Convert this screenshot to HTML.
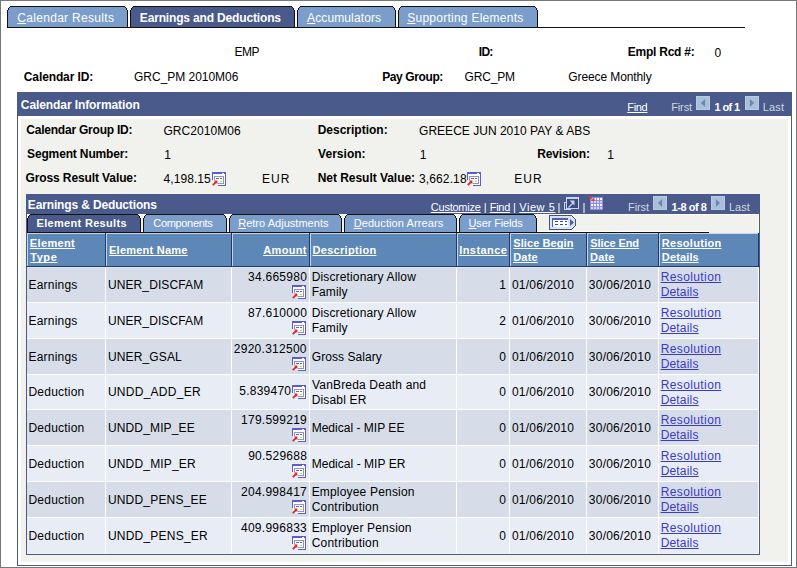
<!DOCTYPE html>
<html><head><meta charset="utf-8"><style>
html,body{margin:0;padding:0;}
body{width:797px;height:568px;position:relative;overflow:hidden;background:#fff;font-family:"Liberation Sans",sans-serif;}
.a{position:absolute;}
.t{position:absolute;white-space:nowrap;line-height:14px;text-decoration-skip-ink:none;}
u{text-decoration-skip-ink:none;}
svg{display:block;}
</style></head><body>
<div class="a" style="left:0px;top:0px;width:797px;height:1px;background:#777;"></div>
<div class="a" style="left:0px;top:567px;width:797px;height:1px;background:#777;"></div>
<div class="a" style="left:0px;top:0px;width:1px;height:568px;background:#777;"></div>
<div class="a" style="left:796px;top:0px;width:1px;height:568px;background:#777;"></div>
<svg class="a" style="left:7px;top:6px" width="121" height="21" shape-rendering="crispEdges"><rect x="3" y="1" width="115" height="1" fill="#7b9dcc"/><rect x="2" y="2" width="117" height="2" fill="#7b9dcc"/><rect x="1" y="4" width="119" height="17" fill="#7b9dcc"/><rect x="3" y="0" width="115" height="1" fill="#111"/><rect x="2" y="1" width="1" height="1" fill="#111"/><rect x="118" y="1" width="1" height="1" fill="#111"/><rect x="1" y="2" width="1" height="2" fill="#111"/><rect x="119" y="2" width="1" height="2" fill="#111"/><rect x="0" y="4" width="1" height="17" fill="#111"/><rect x="120" y="4" width="1" height="17" fill="#111"/></svg>
<svg class="a" style="left:130px;top:6px" width="165" height="21" shape-rendering="crispEdges"><rect x="3" y="1" width="159" height="1" fill="#4a5a8a"/><rect x="2" y="2" width="161" height="2" fill="#4a5a8a"/><rect x="1" y="4" width="163" height="17" fill="#4a5a8a"/><rect x="3" y="0" width="159" height="1" fill="#111"/><rect x="2" y="1" width="1" height="1" fill="#111"/><rect x="162" y="1" width="1" height="1" fill="#111"/><rect x="1" y="2" width="1" height="2" fill="#111"/><rect x="163" y="2" width="1" height="2" fill="#111"/><rect x="0" y="4" width="1" height="17" fill="#111"/><rect x="164" y="4" width="1" height="17" fill="#111"/></svg>
<svg class="a" style="left:297px;top:6px" width="99" height="21" shape-rendering="crispEdges"><rect x="3" y="1" width="93" height="1" fill="#7b9dcc"/><rect x="2" y="2" width="95" height="2" fill="#7b9dcc"/><rect x="1" y="4" width="97" height="17" fill="#7b9dcc"/><rect x="3" y="0" width="93" height="1" fill="#111"/><rect x="2" y="1" width="1" height="1" fill="#111"/><rect x="96" y="1" width="1" height="1" fill="#111"/><rect x="1" y="2" width="1" height="2" fill="#111"/><rect x="97" y="2" width="1" height="2" fill="#111"/><rect x="0" y="4" width="1" height="17" fill="#111"/><rect x="98" y="4" width="1" height="17" fill="#111"/></svg>
<svg class="a" style="left:398px;top:6px" width="140" height="21" shape-rendering="crispEdges"><rect x="3" y="1" width="134" height="1" fill="#7b9dcc"/><rect x="2" y="2" width="136" height="2" fill="#7b9dcc"/><rect x="1" y="4" width="138" height="17" fill="#7b9dcc"/><rect x="3" y="0" width="134" height="1" fill="#111"/><rect x="2" y="1" width="1" height="1" fill="#111"/><rect x="137" y="1" width="1" height="1" fill="#111"/><rect x="1" y="2" width="1" height="2" fill="#111"/><rect x="138" y="2" width="1" height="2" fill="#111"/><rect x="0" y="4" width="1" height="17" fill="#111"/><rect x="139" y="4" width="1" height="17" fill="#111"/></svg>
<div class="a" style="left:7px;top:27px;width:738px;height:1px;background:#111;"></div>
<div class="t" id="t0" style="left:17.27px;top:11.0px;font-size:12px;color:#fff;letter-spacing:0.305px;"><u>C</u>alendar Results</div>
<div class="t" id="t1" style="left:139.82px;top:11.0px;font-size:12px;font-weight:bold;color:#fff;letter-spacing:-0.160px;">Earnings and Deductions</div>
<div class="t" id="t2" style="left:307.04px;top:11.0px;font-size:12px;color:#fff;letter-spacing:0.119px;"><u>A</u>ccumulators</div>
<div class="t" id="t3" style="left:407.20px;top:11.0px;font-size:12px;color:#fff;letter-spacing:0.257px;"><u>S</u>upporting Elements</div>
<div class="t" id="t4" style="left:234.49px;top:45.0px;font-size:12px;letter-spacing:-0.534px;">EMP</div>
<div class="t" id="t5" style="left:478.83px;top:45.0px;font-size:12px;font-weight:bold;letter-spacing:-0.737px;">ID:</div>
<div class="t" id="t6" style="left:627.82px;top:45.0px;font-size:12px;font-weight:bold;letter-spacing:-0.253px;">Empl Rcd #:</div>
<div class="t" id="t7" style="left:714.44px;top:46.0px;font-size:12px;">0</div>
<div class="t" id="t8" style="left:23.84px;top:70.0px;font-size:12px;font-weight:bold;letter-spacing:-0.122px;">Calendar ID:</div>
<div class="t" id="t9" style="left:134.07px;top:70.0px;font-size:12px;letter-spacing:-0.030px;">GRC_PM 2010M06</div>
<div class="t" id="t10" style="left:382.23px;top:70.0px;font-size:12px;font-weight:bold;letter-spacing:-0.395px;">Pay Group:</div>
<div class="t" id="t11" style="left:464.61px;top:70.0px;font-size:12px;letter-spacing:-0.195px;">GRC_PM</div>
<div class="t" id="t12" style="left:568.27px;top:70.0px;font-size:12px;letter-spacing:-0.099px;">Greece Monthly</div>
<div class="a" style="left:17px;top:92px;width:775px;height:474px;background:#4a5a8a;"></div>
<div class="a" style="left:18px;top:116px;width:773px;height:449px;background:#fff;"></div>
<div class="a" style="left:21px;top:119px;width:767px;height:443px;background:#f1f2ed;"></div>
<div class="t" id="t13" style="left:20.84px;top:98.0px;font-size:12px;font-weight:bold;color:#fff;letter-spacing:-0.088px;">Calendar Information</div>
<div class="t" id="t14" style="left:627.21px;top:100.0px;font-size:11px;color:#fff;letter-spacing:-0.289px;text-decoration:underline;">Find</div>
<div class="t" id="t15" style="left:671.21px;top:100.0px;font-size:11px;color:#d0d6e2;letter-spacing:-0.131px;">First</div>
<div class="t" id="t16" style="left:714.61px;top:100.0px;font-size:11px;font-weight:bold;color:#fff;letter-spacing:-0.644px;">1 of 1</div>
<div class="t" id="t17" style="left:762.81px;top:100.0px;font-size:11px;color:#d0d6e2;letter-spacing:0.118px;">Last</div>
<div class="a" style="left:696px;top:96px;width:14px;height:14px"><svg width="14" height="14" shape-rendering="crispEdges"><rect width="14" height="14" fill="#b6cae2"/><rect x="1" y="1" width="12" height="12" fill="#aac0da"/><path d="M9.1 3 L9.1 11 L4.9 7 Z" fill="#6a88b2" shape-rendering="auto"/></svg></div>
<div class="a" style="left:745px;top:96px;width:14px;height:14px"><svg width="14" height="14" shape-rendering="crispEdges"><rect width="14" height="14" fill="#b6cae2"/><rect x="1" y="1" width="12" height="12" fill="#aac0da"/><path d="M4.9 3 L4.9 11 L9.1 7 Z" fill="#6a88b2" shape-rendering="auto"/></svg></div>
<div class="t" id="t18" style="left:26.29px;top:123.0px;font-size:12px;font-weight:bold;letter-spacing:-0.220px;">Calendar Group ID:</div>
<div class="t" id="t19" style="left:163.41px;top:124.0px;font-size:12px;letter-spacing:0.076px;">GRC2010M06</div>
<div class="t" id="t20" style="left:317.69px;top:123.0px;font-size:12px;font-weight:bold;letter-spacing:-0.003px;">Description:</div>
<div class="t" id="t21" style="left:419.07px;top:124.0px;font-size:12px;letter-spacing:0.016px;">GREECE JUN 2010 PAY &amp; ABS</div>
<div class="t" id="t22" style="left:27.06px;top:147.0px;font-size:12px;font-weight:bold;letter-spacing:-0.149px;">Segment Number:</div>
<div class="t" id="t23" style="left:164.21px;top:148.0px;font-size:12px;">1</div>
<div class="t" id="t24" style="left:318.07px;top:147.0px;font-size:12px;font-weight:bold;letter-spacing:0.029px;">Version:</div>
<div class="t" id="t25" style="left:419.72px;top:148.0px;font-size:12px;">1</div>
<div class="t" id="t26" style="left:537.23px;top:147.0px;font-size:12px;font-weight:bold;letter-spacing:-0.167px;">Revision:</div>
<div class="t" id="t27" style="left:607.15px;top:148.0px;font-size:12px;">1</div>
<div class="t" id="t28" style="left:25.46px;top:171.0px;font-size:12px;font-weight:bold;letter-spacing:-0.106px;">Gross Result Value:</div>
<div class="t" id="t29" style="left:163.49px;top:172.0px;font-size:12px;letter-spacing:0.073px;">4,198.15</div>
<div class="a" style="left:212px;top:172px;width:14px;height:14px"><svg width="14" height="14" viewBox="0 0 14 14" shape-rendering="crispEdges"><rect x="1" y="2" width="12" height="11" fill="#fff"/><rect x="0" y="0" width="14" height="2" fill="#5a5ccf"/><rect x="10" y="1" width="2" height="1" fill="#fff"/><rect x="0" y="0" width="1" height="8" fill="#5a5ccf"/><rect x="13" y="0" width="1" height="14" fill="#5a5ccf"/><rect x="6" y="13" width="8" height="1" fill="#5a5ccf"/><rect x="2" y="4" width="10" height="1" fill="#8a90e0"/><rect x="2" y="4" width="1" height="4" fill="#8a90e0"/><rect x="11" y="4" width="1" height="8" fill="#8a90e0"/><rect x="6" y="11" width="6" height="1" fill="#8a90e0"/><rect x="4" y="6" width="3" height="1" fill="#6a6a6a"/><rect x="8" y="6" width="2" height="1" fill="#6a6a6a"/><rect x="8" y="9" width="2" height="1" fill="#d4d400"/><path d="M0.8 13.2 L4 10" stroke="#d82828" stroke-width="1.8" fill="none" shape-rendering="auto"/><path d="M1.8 8.6 H5.4 V12.2 Z" fill="#d82828" shape-rendering="auto"/></svg></div>
<div class="t" id="t30" style="left:262.11px;top:172.0px;font-size:12px;letter-spacing:0.929px;">EUR</div>
<div class="t" id="t31" style="left:317.69px;top:171.0px;font-size:12px;font-weight:bold;letter-spacing:-0.040px;">Net Result Value:</div>
<div class="t" id="t32" style="left:419.06px;top:172.0px;font-size:12px;letter-spacing:0.116px;">3,662.18</div>
<div class="a" style="left:467px;top:172px;width:14px;height:14px"><svg width="14" height="14" viewBox="0 0 14 14" shape-rendering="crispEdges"><rect x="1" y="2" width="12" height="11" fill="#fff"/><rect x="0" y="0" width="14" height="2" fill="#5a5ccf"/><rect x="10" y="1" width="2" height="1" fill="#fff"/><rect x="0" y="0" width="1" height="8" fill="#5a5ccf"/><rect x="13" y="0" width="1" height="14" fill="#5a5ccf"/><rect x="6" y="13" width="8" height="1" fill="#5a5ccf"/><rect x="2" y="4" width="10" height="1" fill="#8a90e0"/><rect x="2" y="4" width="1" height="4" fill="#8a90e0"/><rect x="11" y="4" width="1" height="8" fill="#8a90e0"/><rect x="6" y="11" width="6" height="1" fill="#8a90e0"/><rect x="4" y="6" width="3" height="1" fill="#6a6a6a"/><rect x="8" y="6" width="2" height="1" fill="#6a6a6a"/><rect x="8" y="9" width="2" height="1" fill="#d4d400"/><path d="M0.8 13.2 L4 10" stroke="#d82828" stroke-width="1.8" fill="none" shape-rendering="auto"/><path d="M1.8 8.6 H5.4 V12.2 Z" fill="#d82828" shape-rendering="auto"/></svg></div>
<div class="t" id="t33" style="left:514.29px;top:172.0px;font-size:12px;letter-spacing:1.002px;">EUR</div>
<div class="a" style="left:26px;top:194px;width:734px;height:20px;background:#4a5a8a;"></div>
<div class="t" id="t34" style="left:27.82px;top:198.0px;font-size:12px;font-weight:bold;color:#fff;letter-spacing:-0.144px;">Earnings &amp; Deductions</div>
<div class="t" id="t35" style="left:430.81px;top:200.0px;font-size:11px;color:#fff;letter-spacing:-0.239px;text-decoration:underline;">Customize</div>
<div class="t" id="t36" style="left:483.66px;top:200.0px;font-size:11px;color:#fff;">|</div>
<div class="t" id="t37" style="left:489.66px;top:200.0px;font-size:11px;color:#fff;letter-spacing:-0.225px;text-decoration:underline;">Find</div>
<div class="t" id="t38" style="left:512.91px;top:200.0px;font-size:11px;color:#fff;">|</div>
<div class="t" id="t39" style="left:519.24px;top:200.0px;font-size:11px;color:#fff;letter-spacing:0.544px;text-decoration:underline;">View 5</div>
<div class="t" id="t40" style="left:557.50px;top:200px;font-size:11px;color:#fff;">|</div>
<div class="t" id="t41" style="left:582.60px;top:200px;font-size:11px;color:#fff;">|</div>
<div class="t" id="t42" style="left:628.01px;top:200.0px;font-size:11px;color:#d0d6e2;letter-spacing:-0.078px;">First</div>
<div class="t" id="t43" style="left:671.61px;top:200.0px;font-size:11px;font-weight:bold;color:#fff;letter-spacing:-0.452px;">1-8 of 8</div>
<div class="t" id="t44" style="left:728.97px;top:200.0px;font-size:11px;color:#d0d6e2;letter-spacing:-0.023px;">Last</div>
<div class="a" style="left:653px;top:196px;width:14px;height:14px"><svg width="14" height="14" shape-rendering="crispEdges"><rect width="14" height="14" fill="#b6cae2"/><rect x="1" y="1" width="12" height="12" fill="#aac0da"/><path d="M9.1 3 L9.1 11 L4.9 7 Z" fill="#6a88b2" shape-rendering="auto"/></svg></div>
<div class="a" style="left:711px;top:196px;width:14px;height:14px"><svg width="14" height="14" shape-rendering="crispEdges"><rect width="14" height="14" fill="#b6cae2"/><rect x="1" y="1" width="12" height="12" fill="#aac0da"/><path d="M4.9 3 L4.9 11 L9.1 7 Z" fill="#6a88b2" shape-rendering="auto"/></svg></div>
<svg class="a" style="left:563px;top:196px" width="18" height="15" shape-rendering="crispEdges"><rect x="1" y="6" width="7" height="8" fill="#c8d2f2"/><rect x="2" y="7" width="5" height="6" fill="#4a5a8a"/><rect x="3" y="1" width="13" height="12" fill="#c8d2f2"/><rect x="4" y="3" width="11" height="9" fill="#3c4c82"/><path d="M5.5 11.5 L10 7" stroke="#c8d2f2" stroke-width="1.3" fill="none" shape-rendering="auto"/><path d="M6.5 4.5 H11.5 V9.5 Z" fill="#c8d2f2" shape-rendering="auto"/></svg>
<svg class="a" style="left:588px;top:195px" width="16" height="16" shape-rendering="crispEdges"><rect x="2" y="2" width="13" height="13" fill="#8a8ee8"/><rect x="3" y="3" width="2" height="2" fill="#ffffff"/><rect x="3" y="6" width="2" height="2" fill="#d6d2fa"/><rect x="3" y="9" width="2" height="2" fill="#ffffff"/><rect x="3" y="12" width="2" height="2" fill="#d6d2fa"/><rect x="6" y="3" width="2" height="2" fill="#ffffff"/><rect x="6" y="6" width="2" height="2" fill="#d6d2fa"/><rect x="6" y="9" width="2" height="2" fill="#ffffff"/><rect x="6" y="12" width="2" height="2" fill="#d6d2fa"/><rect x="9" y="3" width="2" height="2" fill="#ffffff"/><rect x="9" y="6" width="2" height="2" fill="#d6d2fa"/><rect x="9" y="9" width="2" height="2" fill="#ffffff"/><rect x="9" y="12" width="2" height="2" fill="#d6d2fa"/><rect x="12" y="3" width="2" height="2" fill="#ffffff"/><rect x="12" y="6" width="2" height="2" fill="#d6d2fa"/><rect x="12" y="9" width="2" height="2" fill="#ffffff"/><rect x="12" y="12" width="2" height="2" fill="#d6d2fa"/><path d="M1 1 L4.5 4.5" stroke="#e03838" stroke-width="1.6" fill="none" shape-rendering="auto"/><path d="M6.5 2.5 L6.5 6 L3 6 Z" fill="#e03838" shape-rendering="auto"/></svg>
<div class="a" style="left:27px;top:214px;width:732px;height:19px;background:#f1f2ed;"></div>
<div class="a" style="left:27px;top:214px;width:732px;height:1px;background:#fff;"></div>
<div class="a" style="left:758px;top:214px;width:1px;height:19px;background:#fff;"></div>
<div class="a" style="left:27px;top:231px;width:682px;height:1px;background:#fff;"></div>
<div class="a" style="left:26px;top:214px;width:1px;height:20px;background:#4a5a8a;"></div>
<div class="a" style="left:759px;top:214px;width:1px;height:20px;background:#4a5a8a;"></div>
<svg class="a" style="left:27px;top:214px" width="114" height="18" shape-rendering="crispEdges"><rect x="0" y="0" width="114" height="18" fill="#fff"/><rect x="3" y="1" width="108" height="1" fill="#4a5a8a"/><rect x="2" y="2" width="110" height="2" fill="#4a5a8a"/><rect x="1" y="4" width="112" height="14" fill="#4a5a8a"/><rect x="3" y="0" width="108" height="1" fill="#111"/><rect x="2" y="1" width="1" height="1" fill="#111"/><rect x="111" y="1" width="1" height="1" fill="#111"/><rect x="1" y="2" width="1" height="2" fill="#111"/><rect x="112" y="2" width="1" height="2" fill="#111"/><rect x="0" y="4" width="1" height="14" fill="#111"/><rect x="113" y="4" width="1" height="14" fill="#111"/></svg>
<svg class="a" style="left:143px;top:214px" width="84" height="18" shape-rendering="crispEdges"><rect x="0" y="0" width="84" height="18" fill="#fff"/><rect x="3" y="1" width="78" height="1" fill="#7b9dcc"/><rect x="2" y="2" width="80" height="2" fill="#7b9dcc"/><rect x="1" y="4" width="82" height="14" fill="#7b9dcc"/><rect x="3" y="0" width="78" height="1" fill="#111"/><rect x="2" y="1" width="1" height="1" fill="#111"/><rect x="81" y="1" width="1" height="1" fill="#111"/><rect x="1" y="2" width="1" height="2" fill="#111"/><rect x="82" y="2" width="1" height="2" fill="#111"/><rect x="0" y="4" width="1" height="14" fill="#111"/><rect x="83" y="4" width="1" height="14" fill="#111"/></svg>
<svg class="a" style="left:229px;top:214px" width="113" height="18" shape-rendering="crispEdges"><rect x="0" y="0" width="113" height="18" fill="#fff"/><rect x="3" y="1" width="107" height="1" fill="#7b9dcc"/><rect x="2" y="2" width="109" height="2" fill="#7b9dcc"/><rect x="1" y="4" width="111" height="14" fill="#7b9dcc"/><rect x="3" y="0" width="107" height="1" fill="#111"/><rect x="2" y="1" width="1" height="1" fill="#111"/><rect x="110" y="1" width="1" height="1" fill="#111"/><rect x="1" y="2" width="1" height="2" fill="#111"/><rect x="111" y="2" width="1" height="2" fill="#111"/><rect x="0" y="4" width="1" height="14" fill="#111"/><rect x="112" y="4" width="1" height="14" fill="#111"/></svg>
<svg class="a" style="left:344px;top:214px" width="113" height="18" shape-rendering="crispEdges"><rect x="0" y="0" width="113" height="18" fill="#fff"/><rect x="3" y="1" width="107" height="1" fill="#7b9dcc"/><rect x="2" y="2" width="109" height="2" fill="#7b9dcc"/><rect x="1" y="4" width="111" height="14" fill="#7b9dcc"/><rect x="3" y="0" width="107" height="1" fill="#111"/><rect x="2" y="1" width="1" height="1" fill="#111"/><rect x="110" y="1" width="1" height="1" fill="#111"/><rect x="1" y="2" width="1" height="2" fill="#111"/><rect x="111" y="2" width="1" height="2" fill="#111"/><rect x="0" y="4" width="1" height="14" fill="#111"/><rect x="112" y="4" width="1" height="14" fill="#111"/></svg>
<svg class="a" style="left:459px;top:214px" width="78" height="18" shape-rendering="crispEdges"><rect x="0" y="0" width="78" height="18" fill="#fff"/><rect x="3" y="1" width="72" height="1" fill="#7b9dcc"/><rect x="2" y="2" width="74" height="2" fill="#7b9dcc"/><rect x="1" y="4" width="76" height="14" fill="#7b9dcc"/><rect x="3" y="0" width="72" height="1" fill="#111"/><rect x="2" y="1" width="1" height="1" fill="#111"/><rect x="75" y="1" width="1" height="1" fill="#111"/><rect x="1" y="2" width="1" height="2" fill="#111"/><rect x="76" y="2" width="1" height="2" fill="#111"/><rect x="0" y="4" width="1" height="14" fill="#111"/><rect x="77" y="4" width="1" height="14" fill="#111"/></svg>
<div class="a" style="left:27px;top:232px;width:682px;height:1px;background:#111;"></div>
<div class="t" id="t45" style="left:36.51px;top:216.0px;font-size:11px;font-weight:bold;color:#fff;letter-spacing:0.317px;">Element Results</div>
<div class="t" id="t46" style="left:153.27px;top:216.0px;font-size:11px;color:#fff;letter-spacing:-0.321px;">Components</div>
<div class="t" id="t47" style="left:238.17px;top:216.0px;font-size:11px;color:#fff;letter-spacing:0.028px;"><u>R</u>etro Adjustments</div>
<div class="t" id="t48" style="left:353.66px;top:216.0px;font-size:11px;color:#fff;letter-spacing:0.091px;"><u>D</u>eduction Arrears</div>
<div class="t" id="t49" style="left:468.47px;top:216.0px;font-size:11px;color:#fff;letter-spacing:-0.125px;"><u>U</u>ser Fields</div>
<svg class="a" style="left:549px;top:215px" width="27" height="15" shape-rendering="crispEdges"><rect x="1" y="1" width="22" height="13" fill="#d8e4fa"/><rect x="23" y="2" width="1" height="11" fill="#d8e4fa"/><rect x="24" y="3" width="1" height="9" fill="#d8e4fa"/><rect x="25" y="4" width="1" height="7" fill="#d8e4fa"/><rect x="0" y="0" width="23" height="1" fill="#4c5266"/><rect x="0" y="14" width="23" height="1" fill="#4c5266"/><rect x="0" y="0" width="1" height="15" fill="#4c5266"/><rect x="23" y="1" width="1" height="1" fill="#4c5266"/><rect x="24" y="2" width="1" height="1" fill="#4c5266"/><rect x="25" y="3" width="1" height="1" fill="#4c5266"/><rect x="26" y="4" width="1" height="7" fill="#4c5266"/><rect x="25" y="11" width="1" height="1" fill="#4c5266"/><rect x="24" y="12" width="1" height="1" fill="#4c5266"/><rect x="23" y="13" width="1" height="1" fill="#4c5266"/><rect x="3" y="3" width="16" height="2" fill="#5060b0"/><rect x="3" y="3" width="1" height="9" fill="#5060b0"/><rect x="4" y="5" width="15" height="7" fill="#fff"/><rect x="6" y="6" width="3" height="1" fill="#3a4a8a"/><rect x="11" y="6" width="3" height="1" fill="#3a4a8a"/><rect x="16" y="6" width="2" height="1" fill="#3a4a8a"/><rect x="6" y="9" width="3" height="1" fill="#3a4a8a"/><rect x="11" y="9" width="3" height="1" fill="#3a4a8a"/><rect x="16" y="9" width="2" height="1" fill="#3a4a8a"/><path d="M21 4 L25 7.5 L21 11 Z" fill="#4a5a9a" shape-rendering="auto"/></svg>
<div class="a" style="left:26px;top:233px;width:734px;height:34px;background:#5c87b6;"></div>
<div class="a" style="left:26px;top:233px;width:1px;height:322px;background:#4a5a8a;"></div>
<div class="a" style="left:759px;top:233px;width:1px;height:322px;background:#4a5a8a;"></div>
<div class="a" style="left:27px;top:233px;width:732px;height:1px;background:#c8d4e6;"></div>
<div class="a" style="left:26px;top:266px;width:734px;height:1px;background:#1f3a70;"></div>
<div class="a" style="left:27px;top:233px;width:1px;height:33px;background:#c8d4e6;"></div>
<div class="a" style="left:105px;top:233px;width:1px;height:34px;background:#1f3a70;"></div>
<div class="a" style="left:106px;top:233px;width:1px;height:33px;background:#c8d4e6;"></div>
<div class="a" style="left:231px;top:233px;width:1px;height:34px;background:#1f3a70;"></div>
<div class="a" style="left:232px;top:233px;width:1px;height:33px;background:#c8d4e6;"></div>
<div class="a" style="left:309px;top:233px;width:1px;height:34px;background:#1f3a70;"></div>
<div class="a" style="left:310px;top:233px;width:1px;height:33px;background:#c8d4e6;"></div>
<div class="a" style="left:456px;top:233px;width:1px;height:34px;background:#1f3a70;"></div>
<div class="a" style="left:457px;top:233px;width:1px;height:33px;background:#c8d4e6;"></div>
<div class="a" style="left:509px;top:233px;width:1px;height:34px;background:#1f3a70;"></div>
<div class="a" style="left:510px;top:233px;width:1px;height:33px;background:#c8d4e6;"></div>
<div class="a" style="left:586px;top:233px;width:1px;height:34px;background:#1f3a70;"></div>
<div class="a" style="left:587px;top:233px;width:1px;height:33px;background:#c8d4e6;"></div>
<div class="a" style="left:658px;top:233px;width:1px;height:34px;background:#1f3a70;"></div>
<div class="a" style="left:659px;top:233px;width:1px;height:33px;background:#c8d4e6;"></div>
<div class="a" style="left:758px;top:233px;width:1px;height:34px;background:#1f3a70;"></div>
<div class="t" id="t50" style="left:29.84px;top:236.0px;font-size:11px;font-weight:bold;color:#fff;letter-spacing:0.353px;text-decoration:underline;">Element</div>
<div class="t" id="t51" style="left:30.14px;top:250.0px;font-size:11px;font-weight:bold;color:#fff;letter-spacing:0.606px;text-decoration:underline;">Type</div>
<div class="t" id="t52" style="left:109.04px;top:243.0px;font-size:11px;font-weight:bold;color:#fff;letter-spacing:0.229px;text-decoration:underline;">Element Name</div>
<div class="t" id="t53" style="left:263.21px;top:243.0px;font-size:11px;font-weight:bold;color:#fff;letter-spacing:0.357px;text-decoration:underline;">Amount</div>
<div class="t" id="t54" style="left:312.47px;top:243.0px;font-size:11px;font-weight:bold;color:#fff;letter-spacing:0.315px;text-decoration:underline;">Description</div>
<div class="t" id="t55" style="left:459.19px;top:243.0px;font-size:11px;font-weight:bold;color:#fff;letter-spacing:0.438px;text-decoration:underline;">Instance</div>
<div class="t" id="t56" style="left:513.31px;top:236.0px;font-size:11px;font-weight:bold;color:#fff;letter-spacing:0.080px;text-decoration:underline;">Slice Begin</div>
<div class="t" id="t57" style="left:513.24px;top:250.0px;font-size:11px;font-weight:bold;color:#fff;letter-spacing:0.189px;text-decoration:underline;">Date</div>
<div class="t" id="t58" style="left:590.27px;top:236.0px;font-size:11px;font-weight:bold;color:#fff;letter-spacing:-0.091px;text-decoration:underline;">Slice End</div>
<div class="t" id="t59" style="left:590.07px;top:250.0px;font-size:11px;font-weight:bold;color:#fff;letter-spacing:0.189px;text-decoration:underline;">Date</div>
<div class="t" id="t60" style="left:661.84px;top:236.0px;font-size:11px;font-weight:bold;color:#fff;letter-spacing:0.283px;text-decoration:underline;">Resolution</div>
<div class="t" id="t61" style="left:661.84px;top:250.0px;font-size:11px;font-weight:bold;color:#fff;letter-spacing:0.140px;text-decoration:underline;">Details</div>
<div class="a" style="left:27px;top:267px;width:732px;height:35px;background:#fff;"></div>
<div class="a" style="left:27px;top:267px;width:732px;height:1px;background:#e1e6f0;"></div>
<div class="a" style="left:27px;top:268px;width:78px;height:34px;background:#d6dde9;"></div>
<div class="a" style="left:106px;top:268px;width:125px;height:34px;background:#d6dde9;"></div>
<div class="a" style="left:232px;top:268px;width:77px;height:34px;background:#d6dde9;"></div>
<div class="a" style="left:310px;top:268px;width:146px;height:34px;background:#d6dde9;"></div>
<div class="a" style="left:457px;top:268px;width:52px;height:34px;background:#d6dde9;"></div>
<div class="a" style="left:510px;top:268px;width:76px;height:34px;background:#d6dde9;"></div>
<div class="a" style="left:587px;top:268px;width:71px;height:34px;background:#d6dde9;"></div>
<div class="a" style="left:659px;top:268px;width:99px;height:34px;background:#d6dde9;"></div>
<div class="t" id="t62" style="left:28.49px;top:278.0px;font-size:12px;letter-spacing:0.205px;">Earnings</div>
<div class="t" id="t63" style="left:107.91px;top:278.0px;font-size:12px;letter-spacing:0.110px;">UNER_DISCFAM</div>
<div class="t" id="t64" style="left:248.09px;top:270.0px;font-size:12px;letter-spacing:0.253px;">34.665980</div>
<div class="a" style="left:292px;top:285px;width:14px;height:14px"><svg width="14" height="14" viewBox="0 0 14 14" shape-rendering="crispEdges"><rect x="1" y="2" width="12" height="11" fill="#fff"/><rect x="0" y="0" width="14" height="2" fill="#5a5ccf"/><rect x="10" y="1" width="2" height="1" fill="#fff"/><rect x="0" y="0" width="1" height="8" fill="#5a5ccf"/><rect x="13" y="0" width="1" height="14" fill="#5a5ccf"/><rect x="6" y="13" width="8" height="1" fill="#5a5ccf"/><rect x="2" y="4" width="10" height="1" fill="#8a90e0"/><rect x="2" y="4" width="1" height="4" fill="#8a90e0"/><rect x="11" y="4" width="1" height="8" fill="#8a90e0"/><rect x="6" y="11" width="6" height="1" fill="#8a90e0"/><rect x="4" y="6" width="3" height="1" fill="#6a6a6a"/><rect x="8" y="6" width="2" height="1" fill="#6a6a6a"/><rect x="8" y="9" width="2" height="1" fill="#d4d400"/><path d="M0.8 13.2 L4 10" stroke="#d82828" stroke-width="1.8" fill="none" shape-rendering="auto"/><path d="M1.8 8.6 H5.4 V12.2 Z" fill="#d82828" shape-rendering="auto"/></svg></div>
<div class="t" id="t65" style="left:311.64px;top:270.0px;font-size:12px;letter-spacing:0.156px;">Discretionary Allow</div>
<div class="t" id="t66" style="left:311.64px;top:285.0px;font-size:12px;letter-spacing:0.111px;">Family</div>
<div class="t" id="t67" style="left:499.17px;top:278.0px;font-size:12px;">1</div>
<div class="t" id="t68" style="left:511.91px;top:278.0px;font-size:12px;letter-spacing:0.216px;">01/06/2010</div>
<div class="t" id="t69" style="left:588.86px;top:278.0px;font-size:12px;letter-spacing:0.211px;">30/06/2010</div>
<div class="t" id="t70" style="left:660.64px;top:270.0px;font-size:12px;color:#3a3acb;letter-spacing:0.399px;text-decoration:underline;">Resolution</div>
<div class="t" id="t71" style="left:660.64px;top:285.0px;font-size:12px;color:#3a3acb;letter-spacing:0.189px;text-decoration:underline;">Details</div>
<div class="a" style="left:27px;top:302px;width:732px;height:36px;background:#fff;"></div>
<div class="a" style="left:27px;top:303px;width:78px;height:35px;background:#e8ecf5;"></div>
<div class="a" style="left:106px;top:303px;width:125px;height:35px;background:#e8ecf5;"></div>
<div class="a" style="left:232px;top:303px;width:77px;height:35px;background:#e8ecf5;"></div>
<div class="a" style="left:310px;top:303px;width:146px;height:35px;background:#e8ecf5;"></div>
<div class="a" style="left:457px;top:303px;width:52px;height:35px;background:#e8ecf5;"></div>
<div class="a" style="left:510px;top:303px;width:76px;height:35px;background:#e8ecf5;"></div>
<div class="a" style="left:587px;top:303px;width:71px;height:35px;background:#e8ecf5;"></div>
<div class="a" style="left:659px;top:303px;width:99px;height:35px;background:#e8ecf5;"></div>
<div class="t" id="t72" style="left:28.49px;top:314.0px;font-size:12px;letter-spacing:0.205px;">Earnings</div>
<div class="t" id="t73" style="left:107.91px;top:314.0px;font-size:12px;letter-spacing:0.110px;">UNER_DISCFAM</div>
<div class="t" id="t74" style="left:248.09px;top:306.0px;font-size:12px;letter-spacing:0.253px;">87.610000</div>
<div class="a" style="left:292px;top:321px;width:14px;height:14px"><svg width="14" height="14" viewBox="0 0 14 14" shape-rendering="crispEdges"><rect x="1" y="2" width="12" height="11" fill="#fff"/><rect x="0" y="0" width="14" height="2" fill="#5a5ccf"/><rect x="10" y="1" width="2" height="1" fill="#fff"/><rect x="0" y="0" width="1" height="8" fill="#5a5ccf"/><rect x="13" y="0" width="1" height="14" fill="#5a5ccf"/><rect x="6" y="13" width="8" height="1" fill="#5a5ccf"/><rect x="2" y="4" width="10" height="1" fill="#8a90e0"/><rect x="2" y="4" width="1" height="4" fill="#8a90e0"/><rect x="11" y="4" width="1" height="8" fill="#8a90e0"/><rect x="6" y="11" width="6" height="1" fill="#8a90e0"/><rect x="4" y="6" width="3" height="1" fill="#6a6a6a"/><rect x="8" y="6" width="2" height="1" fill="#6a6a6a"/><rect x="8" y="9" width="2" height="1" fill="#d4d400"/><path d="M0.8 13.2 L4 10" stroke="#d82828" stroke-width="1.8" fill="none" shape-rendering="auto"/><path d="M1.8 8.6 H5.4 V12.2 Z" fill="#d82828" shape-rendering="auto"/></svg></div>
<div class="t" id="t75" style="left:311.64px;top:306.0px;font-size:12px;letter-spacing:0.156px;">Discretionary Allow</div>
<div class="t" id="t76" style="left:311.64px;top:321.0px;font-size:12px;letter-spacing:0.111px;">Family</div>
<div class="t" id="t77" style="left:499.18px;top:314.0px;font-size:12px;">2</div>
<div class="t" id="t78" style="left:511.91px;top:314.0px;font-size:12px;letter-spacing:0.216px;">01/06/2010</div>
<div class="t" id="t79" style="left:588.86px;top:314.0px;font-size:12px;letter-spacing:0.211px;">30/06/2010</div>
<div class="t" id="t80" style="left:660.64px;top:306.0px;font-size:12px;color:#3a3acb;letter-spacing:0.399px;text-decoration:underline;">Resolution</div>
<div class="t" id="t81" style="left:660.64px;top:321.0px;font-size:12px;color:#3a3acb;letter-spacing:0.189px;text-decoration:underline;">Details</div>
<div class="a" style="left:27px;top:338px;width:732px;height:36px;background:#fff;"></div>
<div class="a" style="left:27px;top:339px;width:78px;height:35px;background:#d6dde9;"></div>
<div class="a" style="left:106px;top:339px;width:125px;height:35px;background:#d6dde9;"></div>
<div class="a" style="left:232px;top:339px;width:77px;height:35px;background:#d6dde9;"></div>
<div class="a" style="left:310px;top:339px;width:146px;height:35px;background:#d6dde9;"></div>
<div class="a" style="left:457px;top:339px;width:52px;height:35px;background:#d6dde9;"></div>
<div class="a" style="left:510px;top:339px;width:76px;height:35px;background:#d6dde9;"></div>
<div class="a" style="left:587px;top:339px;width:71px;height:35px;background:#d6dde9;"></div>
<div class="a" style="left:659px;top:339px;width:99px;height:35px;background:#d6dde9;"></div>
<div class="t" id="t82" style="left:28.49px;top:350.0px;font-size:12px;letter-spacing:0.205px;">Earnings</div>
<div class="t" id="t83" style="left:107.91px;top:350.0px;font-size:12px;letter-spacing:0.145px;">UNER_GSAL</div>
<div class="t" id="t84" style="left:233.80px;top:342.0px;font-size:12px;letter-spacing:0.266px;">2920.312500</div>
<div class="a" style="left:292px;top:357px;width:14px;height:14px"><svg width="14" height="14" viewBox="0 0 14 14" shape-rendering="crispEdges"><rect x="1" y="2" width="12" height="11" fill="#fff"/><rect x="0" y="0" width="14" height="2" fill="#5a5ccf"/><rect x="10" y="1" width="2" height="1" fill="#fff"/><rect x="0" y="0" width="1" height="8" fill="#5a5ccf"/><rect x="13" y="0" width="1" height="14" fill="#5a5ccf"/><rect x="6" y="13" width="8" height="1" fill="#5a5ccf"/><rect x="2" y="4" width="10" height="1" fill="#8a90e0"/><rect x="2" y="4" width="1" height="4" fill="#8a90e0"/><rect x="11" y="4" width="1" height="8" fill="#8a90e0"/><rect x="6" y="11" width="6" height="1" fill="#8a90e0"/><rect x="4" y="6" width="3" height="1" fill="#6a6a6a"/><rect x="8" y="6" width="2" height="1" fill="#6a6a6a"/><rect x="8" y="9" width="2" height="1" fill="#d4d400"/><path d="M0.8 13.2 L4 10" stroke="#d82828" stroke-width="1.8" fill="none" shape-rendering="auto"/><path d="M1.8 8.6 H5.4 V12.2 Z" fill="#d82828" shape-rendering="auto"/></svg></div>
<div class="t" id="t85" style="left:311.77px;top:350.0px;font-size:12px;letter-spacing:0.054px;">Gross Salary</div>
<div class="t" id="t86" style="left:499.16px;top:350.0px;font-size:12px;">0</div>
<div class="t" id="t87" style="left:511.91px;top:350.0px;font-size:12px;letter-spacing:0.216px;">01/06/2010</div>
<div class="t" id="t88" style="left:588.86px;top:350.0px;font-size:12px;letter-spacing:0.211px;">30/06/2010</div>
<div class="t" id="t89" style="left:660.64px;top:342.0px;font-size:12px;color:#3a3acb;letter-spacing:0.399px;text-decoration:underline;">Resolution</div>
<div class="t" id="t90" style="left:660.64px;top:357.0px;font-size:12px;color:#3a3acb;letter-spacing:0.189px;text-decoration:underline;">Details</div>
<div class="a" style="left:27px;top:374px;width:732px;height:35px;background:#fff;"></div>
<div class="a" style="left:27px;top:375px;width:78px;height:34px;background:#e8ecf5;"></div>
<div class="a" style="left:106px;top:375px;width:125px;height:34px;background:#e8ecf5;"></div>
<div class="a" style="left:232px;top:375px;width:77px;height:34px;background:#e8ecf5;"></div>
<div class="a" style="left:310px;top:375px;width:146px;height:34px;background:#e8ecf5;"></div>
<div class="a" style="left:457px;top:375px;width:52px;height:34px;background:#e8ecf5;"></div>
<div class="a" style="left:510px;top:375px;width:76px;height:34px;background:#e8ecf5;"></div>
<div class="a" style="left:587px;top:375px;width:71px;height:34px;background:#e8ecf5;"></div>
<div class="a" style="left:659px;top:375px;width:99px;height:34px;background:#e8ecf5;"></div>
<div class="t" id="t91" style="left:28.49px;top:385.0px;font-size:12px;letter-spacing:0.218px;">Deduction</div>
<div class="t" id="t92" style="left:107.91px;top:385.0px;font-size:12px;letter-spacing:0.271px;">UNDD_ADD_ER</div>
<div class="t" id="t93" style="left:239.26px;top:384.0px;font-size:12px;letter-spacing:0.244px;">5.839470</div>
<div class="a" style="left:292px;top:385px;width:14px;height:14px"><svg width="14" height="14" viewBox="0 0 14 14" shape-rendering="crispEdges"><rect x="1" y="2" width="12" height="11" fill="#fff"/><rect x="0" y="0" width="14" height="2" fill="#5a5ccf"/><rect x="10" y="1" width="2" height="1" fill="#fff"/><rect x="0" y="0" width="1" height="8" fill="#5a5ccf"/><rect x="13" y="0" width="1" height="14" fill="#5a5ccf"/><rect x="6" y="13" width="8" height="1" fill="#5a5ccf"/><rect x="2" y="4" width="10" height="1" fill="#8a90e0"/><rect x="2" y="4" width="1" height="4" fill="#8a90e0"/><rect x="11" y="4" width="1" height="8" fill="#8a90e0"/><rect x="6" y="11" width="6" height="1" fill="#8a90e0"/><rect x="4" y="6" width="3" height="1" fill="#6a6a6a"/><rect x="8" y="6" width="2" height="1" fill="#6a6a6a"/><rect x="8" y="9" width="2" height="1" fill="#d4d400"/><path d="M0.8 13.2 L4 10" stroke="#d82828" stroke-width="1.8" fill="none" shape-rendering="auto"/><path d="M1.8 8.6 H5.4 V12.2 Z" fill="#d82828" shape-rendering="auto"/></svg></div>
<div class="t" id="t94" style="left:312.09px;top:378.0px;font-size:12px;letter-spacing:0.162px;">VanBreda Death and</div>
<div class="t" id="t95" style="left:311.64px;top:393.0px;font-size:12px;letter-spacing:0.183px;">Disabl ER</div>
<div class="t" id="t96" style="left:499.16px;top:385.0px;font-size:12px;">0</div>
<div class="t" id="t97" style="left:511.91px;top:385.0px;font-size:12px;letter-spacing:0.216px;">01/06/2010</div>
<div class="t" id="t98" style="left:588.86px;top:385.0px;font-size:12px;letter-spacing:0.211px;">30/06/2010</div>
<div class="t" id="t99" style="left:660.64px;top:378.0px;font-size:12px;color:#3a3acb;letter-spacing:0.399px;text-decoration:underline;">Resolution</div>
<div class="t" id="t100" style="left:660.64px;top:393.0px;font-size:12px;color:#3a3acb;letter-spacing:0.189px;text-decoration:underline;">Details</div>
<div class="a" style="left:27px;top:409px;width:732px;height:36px;background:#fff;"></div>
<div class="a" style="left:27px;top:410px;width:78px;height:35px;background:#d6dde9;"></div>
<div class="a" style="left:106px;top:410px;width:125px;height:35px;background:#d6dde9;"></div>
<div class="a" style="left:232px;top:410px;width:77px;height:35px;background:#d6dde9;"></div>
<div class="a" style="left:310px;top:410px;width:146px;height:35px;background:#d6dde9;"></div>
<div class="a" style="left:457px;top:410px;width:52px;height:35px;background:#d6dde9;"></div>
<div class="a" style="left:510px;top:410px;width:76px;height:35px;background:#d6dde9;"></div>
<div class="a" style="left:587px;top:410px;width:71px;height:35px;background:#d6dde9;"></div>
<div class="a" style="left:659px;top:410px;width:99px;height:35px;background:#d6dde9;"></div>
<div class="t" id="t101" style="left:28.49px;top:421.0px;font-size:12px;letter-spacing:0.218px;">Deduction</div>
<div class="t" id="t102" style="left:107.91px;top:421.0px;font-size:12px;letter-spacing:0.150px;">UNDD_MIP_EE</div>
<div class="t" id="t103" style="left:241.04px;top:413.0px;font-size:12px;letter-spacing:0.260px;">179.599219</div>
<div class="a" style="left:292px;top:428px;width:14px;height:14px"><svg width="14" height="14" viewBox="0 0 14 14" shape-rendering="crispEdges"><rect x="1" y="2" width="12" height="11" fill="#fff"/><rect x="0" y="0" width="14" height="2" fill="#5a5ccf"/><rect x="10" y="1" width="2" height="1" fill="#fff"/><rect x="0" y="0" width="1" height="8" fill="#5a5ccf"/><rect x="13" y="0" width="1" height="14" fill="#5a5ccf"/><rect x="6" y="13" width="8" height="1" fill="#5a5ccf"/><rect x="2" y="4" width="10" height="1" fill="#8a90e0"/><rect x="2" y="4" width="1" height="4" fill="#8a90e0"/><rect x="11" y="4" width="1" height="8" fill="#8a90e0"/><rect x="6" y="11" width="6" height="1" fill="#8a90e0"/><rect x="4" y="6" width="3" height="1" fill="#6a6a6a"/><rect x="8" y="6" width="2" height="1" fill="#6a6a6a"/><rect x="8" y="9" width="2" height="1" fill="#d4d400"/><path d="M0.8 13.2 L4 10" stroke="#d82828" stroke-width="1.8" fill="none" shape-rendering="auto"/><path d="M1.8 8.6 H5.4 V12.2 Z" fill="#d82828" shape-rendering="auto"/></svg></div>
<div class="t" id="t104" style="left:311.64px;top:421.0px;font-size:12px;letter-spacing:0.019px;">Medical - MIP EE</div>
<div class="t" id="t105" style="left:499.16px;top:421.0px;font-size:12px;">0</div>
<div class="t" id="t106" style="left:511.91px;top:421.0px;font-size:12px;letter-spacing:0.216px;">01/06/2010</div>
<div class="t" id="t107" style="left:588.86px;top:421.0px;font-size:12px;letter-spacing:0.211px;">30/06/2010</div>
<div class="t" id="t108" style="left:660.64px;top:413.0px;font-size:12px;color:#3a3acb;letter-spacing:0.399px;text-decoration:underline;">Resolution</div>
<div class="t" id="t109" style="left:660.64px;top:428.0px;font-size:12px;color:#3a3acb;letter-spacing:0.189px;text-decoration:underline;">Details</div>
<div class="a" style="left:27px;top:445px;width:732px;height:36px;background:#fff;"></div>
<div class="a" style="left:27px;top:446px;width:78px;height:35px;background:#e8ecf5;"></div>
<div class="a" style="left:106px;top:446px;width:125px;height:35px;background:#e8ecf5;"></div>
<div class="a" style="left:232px;top:446px;width:77px;height:35px;background:#e8ecf5;"></div>
<div class="a" style="left:310px;top:446px;width:146px;height:35px;background:#e8ecf5;"></div>
<div class="a" style="left:457px;top:446px;width:52px;height:35px;background:#e8ecf5;"></div>
<div class="a" style="left:510px;top:446px;width:76px;height:35px;background:#e8ecf5;"></div>
<div class="a" style="left:587px;top:446px;width:71px;height:35px;background:#e8ecf5;"></div>
<div class="a" style="left:659px;top:446px;width:99px;height:35px;background:#e8ecf5;"></div>
<div class="t" id="t110" style="left:28.49px;top:457.0px;font-size:12px;letter-spacing:0.218px;">Deduction</div>
<div class="t" id="t111" style="left:107.91px;top:457.0px;font-size:12px;letter-spacing:0.180px;">UNDD_MIP_ER</div>
<div class="t" id="t112" style="left:248.13px;top:449.0px;font-size:12px;letter-spacing:0.253px;">90.529688</div>
<div class="a" style="left:292px;top:464px;width:14px;height:14px"><svg width="14" height="14" viewBox="0 0 14 14" shape-rendering="crispEdges"><rect x="1" y="2" width="12" height="11" fill="#fff"/><rect x="0" y="0" width="14" height="2" fill="#5a5ccf"/><rect x="10" y="1" width="2" height="1" fill="#fff"/><rect x="0" y="0" width="1" height="8" fill="#5a5ccf"/><rect x="13" y="0" width="1" height="14" fill="#5a5ccf"/><rect x="6" y="13" width="8" height="1" fill="#5a5ccf"/><rect x="2" y="4" width="10" height="1" fill="#8a90e0"/><rect x="2" y="4" width="1" height="4" fill="#8a90e0"/><rect x="11" y="4" width="1" height="8" fill="#8a90e0"/><rect x="6" y="11" width="6" height="1" fill="#8a90e0"/><rect x="4" y="6" width="3" height="1" fill="#6a6a6a"/><rect x="8" y="6" width="2" height="1" fill="#6a6a6a"/><rect x="8" y="9" width="2" height="1" fill="#d4d400"/><path d="M0.8 13.2 L4 10" stroke="#d82828" stroke-width="1.8" fill="none" shape-rendering="auto"/><path d="M1.8 8.6 H5.4 V12.2 Z" fill="#d82828" shape-rendering="auto"/></svg></div>
<div class="t" id="t113" style="left:311.64px;top:457.0px;font-size:12px;letter-spacing:0.041px;">Medical - MIP ER</div>
<div class="t" id="t114" style="left:499.16px;top:457.0px;font-size:12px;">0</div>
<div class="t" id="t115" style="left:511.91px;top:457.0px;font-size:12px;letter-spacing:0.216px;">01/06/2010</div>
<div class="t" id="t116" style="left:588.86px;top:457.0px;font-size:12px;letter-spacing:0.211px;">30/06/2010</div>
<div class="t" id="t117" style="left:660.64px;top:449.0px;font-size:12px;color:#3a3acb;letter-spacing:0.399px;text-decoration:underline;">Resolution</div>
<div class="t" id="t118" style="left:660.64px;top:464.0px;font-size:12px;color:#3a3acb;letter-spacing:0.189px;text-decoration:underline;">Details</div>
<div class="a" style="left:27px;top:481px;width:732px;height:36px;background:#fff;"></div>
<div class="a" style="left:27px;top:482px;width:78px;height:35px;background:#d6dde9;"></div>
<div class="a" style="left:106px;top:482px;width:125px;height:35px;background:#d6dde9;"></div>
<div class="a" style="left:232px;top:482px;width:77px;height:35px;background:#d6dde9;"></div>
<div class="a" style="left:310px;top:482px;width:146px;height:35px;background:#d6dde9;"></div>
<div class="a" style="left:457px;top:482px;width:52px;height:35px;background:#d6dde9;"></div>
<div class="a" style="left:510px;top:482px;width:76px;height:35px;background:#d6dde9;"></div>
<div class="a" style="left:587px;top:482px;width:71px;height:35px;background:#d6dde9;"></div>
<div class="a" style="left:659px;top:482px;width:99px;height:35px;background:#d6dde9;"></div>
<div class="t" id="t119" style="left:28.49px;top:493.0px;font-size:12px;letter-spacing:0.218px;">Deduction</div>
<div class="t" id="t120" style="left:107.91px;top:493.0px;font-size:12px;letter-spacing:0.192px;">UNDD_PENS_EE</div>
<div class="t" id="t121" style="left:241.04px;top:485.0px;font-size:12px;letter-spacing:0.260px;">204.998417</div>
<div class="a" style="left:292px;top:500px;width:14px;height:14px"><svg width="14" height="14" viewBox="0 0 14 14" shape-rendering="crispEdges"><rect x="1" y="2" width="12" height="11" fill="#fff"/><rect x="0" y="0" width="14" height="2" fill="#5a5ccf"/><rect x="10" y="1" width="2" height="1" fill="#fff"/><rect x="0" y="0" width="1" height="8" fill="#5a5ccf"/><rect x="13" y="0" width="1" height="14" fill="#5a5ccf"/><rect x="6" y="13" width="8" height="1" fill="#5a5ccf"/><rect x="2" y="4" width="10" height="1" fill="#8a90e0"/><rect x="2" y="4" width="1" height="4" fill="#8a90e0"/><rect x="11" y="4" width="1" height="8" fill="#8a90e0"/><rect x="6" y="11" width="6" height="1" fill="#8a90e0"/><rect x="4" y="6" width="3" height="1" fill="#6a6a6a"/><rect x="8" y="6" width="2" height="1" fill="#6a6a6a"/><rect x="8" y="9" width="2" height="1" fill="#d4d400"/><path d="M0.8 13.2 L4 10" stroke="#d82828" stroke-width="1.8" fill="none" shape-rendering="auto"/><path d="M1.8 8.6 H5.4 V12.2 Z" fill="#d82828" shape-rendering="auto"/></svg></div>
<div class="t" id="t122" style="left:311.64px;top:485.0px;font-size:12px;letter-spacing:0.184px;">Employee Pension</div>
<div class="t" id="t123" style="left:311.77px;top:500.0px;font-size:12px;letter-spacing:0.191px;">Contribution</div>
<div class="t" id="t124" style="left:499.16px;top:493.0px;font-size:12px;">0</div>
<div class="t" id="t125" style="left:511.91px;top:493.0px;font-size:12px;letter-spacing:0.216px;">01/06/2010</div>
<div class="t" id="t126" style="left:588.86px;top:493.0px;font-size:12px;letter-spacing:0.211px;">30/06/2010</div>
<div class="t" id="t127" style="left:660.64px;top:485.0px;font-size:12px;color:#3a3acb;letter-spacing:0.399px;text-decoration:underline;">Resolution</div>
<div class="t" id="t128" style="left:660.64px;top:500.0px;font-size:12px;color:#3a3acb;letter-spacing:0.189px;text-decoration:underline;">Details</div>
<div class="a" style="left:27px;top:517px;width:732px;height:36px;background:#fff;"></div>
<div class="a" style="left:27px;top:518px;width:78px;height:35px;background:#e8ecf5;"></div>
<div class="a" style="left:106px;top:518px;width:125px;height:35px;background:#e8ecf5;"></div>
<div class="a" style="left:232px;top:518px;width:77px;height:35px;background:#e8ecf5;"></div>
<div class="a" style="left:310px;top:518px;width:146px;height:35px;background:#e8ecf5;"></div>
<div class="a" style="left:457px;top:518px;width:52px;height:35px;background:#e8ecf5;"></div>
<div class="a" style="left:510px;top:518px;width:76px;height:35px;background:#e8ecf5;"></div>
<div class="a" style="left:587px;top:518px;width:71px;height:35px;background:#e8ecf5;"></div>
<div class="a" style="left:659px;top:518px;width:99px;height:35px;background:#e8ecf5;"></div>
<div class="t" id="t129" style="left:28.49px;top:529.0px;font-size:12px;letter-spacing:0.218px;">Deduction</div>
<div class="t" id="t130" style="left:107.91px;top:529.0px;font-size:12px;letter-spacing:0.220px;">UNDD_PENS_ER</div>
<div class="t" id="t131" style="left:241.01px;top:521.0px;font-size:12px;letter-spacing:0.260px;">409.996833</div>
<div class="a" style="left:292px;top:536px;width:14px;height:14px"><svg width="14" height="14" viewBox="0 0 14 14" shape-rendering="crispEdges"><rect x="1" y="2" width="12" height="11" fill="#fff"/><rect x="0" y="0" width="14" height="2" fill="#5a5ccf"/><rect x="10" y="1" width="2" height="1" fill="#fff"/><rect x="0" y="0" width="1" height="8" fill="#5a5ccf"/><rect x="13" y="0" width="1" height="14" fill="#5a5ccf"/><rect x="6" y="13" width="8" height="1" fill="#5a5ccf"/><rect x="2" y="4" width="10" height="1" fill="#8a90e0"/><rect x="2" y="4" width="1" height="4" fill="#8a90e0"/><rect x="11" y="4" width="1" height="8" fill="#8a90e0"/><rect x="6" y="11" width="6" height="1" fill="#8a90e0"/><rect x="4" y="6" width="3" height="1" fill="#6a6a6a"/><rect x="8" y="6" width="2" height="1" fill="#6a6a6a"/><rect x="8" y="9" width="2" height="1" fill="#d4d400"/><path d="M0.8 13.2 L4 10" stroke="#d82828" stroke-width="1.8" fill="none" shape-rendering="auto"/><path d="M1.8 8.6 H5.4 V12.2 Z" fill="#d82828" shape-rendering="auto"/></svg></div>
<div class="t" id="t132" style="left:311.64px;top:521.0px;font-size:12px;letter-spacing:0.164px;">Employer Pension</div>
<div class="t" id="t133" style="left:311.77px;top:536.0px;font-size:12px;letter-spacing:0.191px;">Contribution</div>
<div class="t" id="t134" style="left:499.16px;top:529.0px;font-size:12px;">0</div>
<div class="t" id="t135" style="left:511.91px;top:529.0px;font-size:12px;letter-spacing:0.216px;">01/06/2010</div>
<div class="t" id="t136" style="left:588.86px;top:529.0px;font-size:12px;letter-spacing:0.211px;">30/06/2010</div>
<div class="t" id="t137" style="left:660.64px;top:521.0px;font-size:12px;color:#3a3acb;letter-spacing:0.399px;text-decoration:underline;">Resolution</div>
<div class="t" id="t138" style="left:660.64px;top:536.0px;font-size:12px;color:#3a3acb;letter-spacing:0.189px;text-decoration:underline;">Details</div>
<div class="a" style="left:26px;top:554px;width:734px;height:1px;background:#4a5a8a;"></div>
</body></html>
